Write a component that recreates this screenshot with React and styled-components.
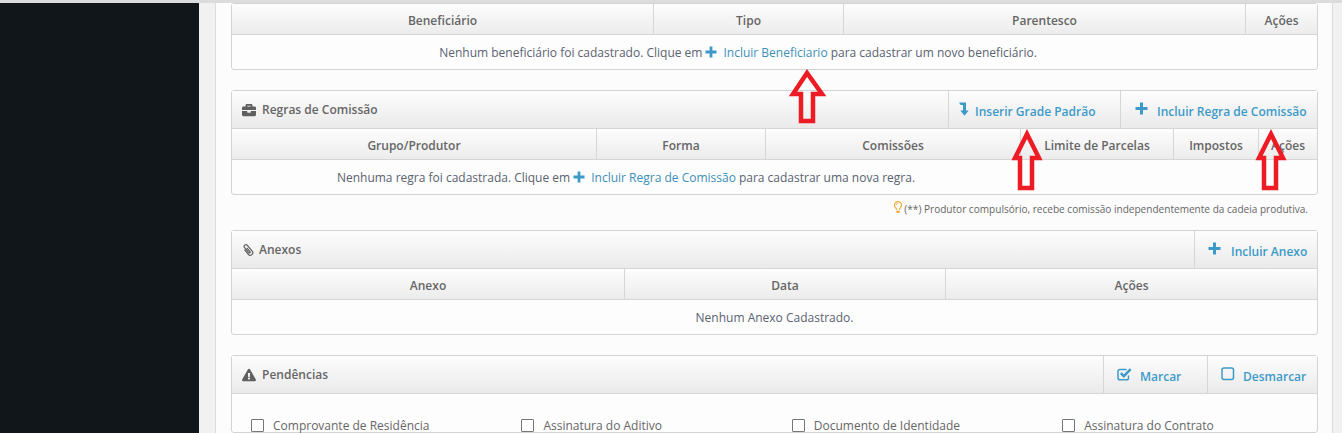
import React from "react";
import styled, { createGlobalStyle } from "styled-components";
import { FaBriefcase, FaExclamationTriangle, FaRegLightbulb } from "react-icons/fa";

const GlobalStyle = createGlobalStyle`
  html, body {
    margin: 0;
    padding: 0;
    height: 433px;
    overflow: hidden;
    background: #f1f1f1;
  }
  * { box-sizing: border-box; }
`;

const Page = styled.div`
  position: relative;
  display: flex;
  width: 1342px;
  height: 433px;
  overflow: hidden;
  border-top: 3px solid #dcdcdc;
  font-family: "Open Sans", sans-serif;
  font-size: 12px;
  color: #5a6270;
`;

const Sidebar = styled.div`
  width: 199px;
  flex: none;
  background: #11161a;
`;

const Wrapper = styled.div`
  flex: 1;
  min-width: 0;
  padding: 0 9px 0 16px;
  background: #f1f1f1;
`;

const Content = styled.div`
  height: 100%;
  padding: 0 14px 0 15px;
  display: flex;
  flex-direction: column;
  background: #fcfcfc;
  border-left: 1px solid #dcdcdc;
  border-right: 1px solid #dcdcdc;
`;

const Panel = styled.section`
  flex: none;
  margin-top: ${(p) => p.$top || 0}px;
  background: #fdfdfd;
  border: 1px solid #d3d3d3;
  border-radius: 3px;
`;

const PanelHead = styled.header`
  display: flex;
  height: 38px;
  border-bottom: 1px solid #d6d6d6;
  background: linear-gradient(#fdfdfd, #eaeaea);
`;

const PanelTitle = styled.h3`
  flex: 1;
  display: flex;
  align-items: center;
  gap: ${(p) => p.$gap || 6}px;
  margin: 0;
  padding-left: 10px;
  font-size: 12px;
  font-weight: 600;
  color: #666;

  svg {
    font-size: 14px;
    color: #5f5f5f;
  }
`;

const HeadAction = styled.a`
  flex: none;
  width: ${(p) => p.$width}px;
  display: flex;
  align-items: center;
  gap: ${(p) => p.$gap}px;
  padding: 3px 0 0 ${(p) => p.$pad}px;
  border-left: 1px solid #d6d6d6;
  font-size: 12px;
  font-weight: 600;
  color: #3c9ac9;

  svg {
    flex: none;
    margin-top: -5px;
    color: #3c9ac9;
  }
`;

const TableHead = styled.div`
  display: grid;
  grid-template-columns: ${(p) => p.$columns};
  height: 31px;
  border-bottom: 1px solid #d6d6d6;
  background: linear-gradient(#fdfdfd, #ececec);
`;

const HeadCell = styled.div`
  display: flex;
  align-items: center;
  justify-content: center;
  padding-top: 2px;
  font-size: 12px;
  font-weight: 600;
  color: #666;
  border-left: 1px solid #d6d6d6;

  &:first-child {
    border-left: none;
  }
`;

const EmptyRow = styled.div`
  display: flex;
  align-items: center;
  justify-content: center;
  height: 34px;
  padding-right: ${(p) => p.$shift || 0}px;
`;

const InlineLink = styled.a`
  display: inline-flex;
  align-items: center;
  gap: 6px;
  margin: 0 3px;
  color: #3c8fb8;

  svg {
    color: #3c9ac9;
  }
`;

const Note = styled.p`
  flex: none;
  display: flex;
  justify-content: flex-end;
  align-items: center;
  height: 35px;
  margin: 0;
  padding: 0 10px 8px 0;
  font-size: 10.07px;
  color: #666;

  svg {
    font-size: 12px;
    color: #f0ad3c;
    margin: -3px 0 0 0;
  }
`;

const CheckGrid = styled.div`
  display: grid;
  grid-template-columns: repeat(3, 270.4px) 1fr;
  padding: 24px 0 0 19px;
`;

const CheckItem = styled.label`
  display: flex;
  align-items: center;
  gap: 9px;
  height: 14px;
  font-size: 12px;
  white-space: nowrap;
  color: #666;
`;

const CheckBox = styled.span`
  flex: none;
  width: 13px;
  height: 13px;
  background: #fff;
  border: 1px solid #767676;
  border-radius: 1px;
`;

const ArrowSvg = styled.svg`
  position: absolute;
  left: ${(p) => p.$left}px;
  top: ${(p) => p.$top}px;
  overflow: visible;
`;

const columns = {
  beneficiarios: "421px 190px 402px 1fr",
  regras: "364px 169px 255px 153px 85px 1fr",
  anexos: "392px 321px 1fr",
};

const pendencias = [
  "Comprovante de Residência",
  "Assinatura do Aditivo",
  "Documento de Identidade",
  "Assinatura do Contrato",
];

function PlusIcon({ size = 13 }) {
  return (
    <svg width={size} height={size} viewBox="0 0 13 13" fill="currentColor">
      <path d="M5 0.5H8V5H12.5V8H8V12.5H5V8H0.5V5H5Z" />
    </svg>
  );
}

function LevelDownIcon() {
  return (
    <svg width="10" height="14" viewBox="0 0 10 14" fill="currentColor">
      <path d="M0 0.5H7V8.5H9.7L5.5 13.8L1.3 8.5H4V3H1.6Z" />
    </svg>
  );
}

function CheckSquareIcon() {
  return (
    <svg width="15" height="14" viewBox="0 0 15 14" fill="none" stroke="currentColor">
      <path
        d="M11.5 8.5V11C11.5 12 10.7 12.8 9.7 12.8H2.8C1.8 12.8 1 12 1 11V4.2C1 3.2 1.8 2.4 2.8 2.4H9.5"
        strokeWidth="1.5"
      />
      <path d="M3.8 6.2L6.8 9.2L13.6 2.2" strokeWidth="2.4" />
    </svg>
  );
}

function SquareIcon() {
  return (
    <svg width="14" height="14" viewBox="0 0 14 14" fill="none" stroke="currentColor">
      <rect x="1" y="1" width="11.5" height="11.5" rx="2" strokeWidth="1.5" />
    </svg>
  );
}

function ClipIcon() {
  return (
    <svg width="12" height="14" viewBox="0 0 12 14" fill="none" stroke="currentColor" strokeWidth="1.2">
      <g transform="rotate(-40 6 7)">
        <path d="M3.5 4.5V10.5a2.5 2.5 0 0 0 5 0V3a1.8 1.8 0 0 0-3.6 0V9.5a.8.8 0 0 0 1.6 0V4.5" />
      </g>
    </svg>
  );
}

function Arrow({ left, top, width, height, points }) {
  return (
    <ArrowSvg $left={left} $top={top} width={width} height={height}>
      <polygon points={points} fill="none" stroke="#ed1c24" strokeWidth="4.5" />
    </ArrowSvg>
  );
}

function Row({ cols, names }) {
  return (
    <TableHead $columns={cols}>
      {names.map((name) => (
        <HeadCell key={name}>{name}</HeadCell>
      ))}
    </TableHead>
  );
}

const tallArrow = "17,7 5,31 10,31 10,61 22,61 22,31 29,31";

export default function App() {
  return (
    <Page>
      <GlobalStyle />
      <Sidebar />
      <Wrapper>
        <Content>
          <Panel>
            <Row
              cols={columns.beneficiarios}
              names={["Beneficiário", "Tipo", "Parentesco", "Ações"]}
            />
            <EmptyRow $shift={73}>
              Nenhum beneficiário foi cadastrado. Clique em
              <InlineLink>
                <PlusIcon size={12} />
                Incluir Beneficiario
              </InlineLink>
              para cadastrar um novo beneficiário.
            </EmptyRow>
          </Panel>

          <Panel $top={20}>
            <PanelHead>
              <PanelTitle>
                <FaBriefcase />
                Regras de Comissão
              </PanelTitle>
              <HeadAction $width={172} $pad={10} $gap={6}>
                <LevelDownIcon />
                Inserir Grade Padrão
              </HeadAction>
              <HeadAction $width={197} $pad={14} $gap={9}>
                <PlusIcon />
                Incluir Regra de Comissão
              </HeadAction>
            </PanelHead>
            <Row
              cols={columns.regras}
              names={["Grupo/Produtor", "Forma", "Comissões", "Limite de Parcelas", "Impostos", "Ações"]}
            />
            <EmptyRow $shift={297}>
              Nenhuma regra foi cadastrada. Clique em
              <InlineLink>
                <PlusIcon size={12} />
                Incluir Regra de Comissão
              </InlineLink>
              para cadastrar uma nova regra.
            </EmptyRow>
          </Panel>

          <Note>
            <FaRegLightbulb />
            (**) Produtor compulsório, recebe comissão independentemente da cadeia produtiva.
          </Note>

          <Panel>
            <PanelHead>
              <PanelTitle $gap={5}>
                <ClipIcon />
                Anexos
              </PanelTitle>
              <HeadAction $width={123} $pad={13} $gap={10}>
                <PlusIcon />
                Incluir Anexo
              </HeadAction>
            </PanelHead>
            <Row cols={columns.anexos} names={["Anexo", "Data", "Ações"]} />
            <EmptyRow>Nenhum Anexo Cadastrado.</EmptyRow>
          </Panel>

          <Panel $top={20}>
            <PanelHead>
              <PanelTitle>
                <FaExclamationTriangle />
                Pendências
              </PanelTitle>
              <HeadAction $width={104} $pad={13} $gap={8}>
                <CheckSquareIcon />
                Marcar
              </HeadAction>
              <HeadAction $width={110} $pad={13} $gap={8}>
                <SquareIcon />
                Desmarcar
              </HeadAction>
            </PanelHead>
            <CheckGrid>
              {pendencias.map((item) => (
                <CheckItem key={item}>
                  <CheckBox />
                  {item}
                </CheckItem>
              ))}
            </CheckGrid>
          </Panel>
        </Content>
      </Wrapper>

      <Arrow left={788} top={63} width={40} height={60} points="19,7 5,28 13,28 13,55 25,55 25,28 34,28" />
      <Arrow left={1010} top={124} width={34} height={66} points={tallArrow} />
      <Arrow left={1254} top={124} width={34} height={66} points={tallArrow} />
    </Page>
  );
}
